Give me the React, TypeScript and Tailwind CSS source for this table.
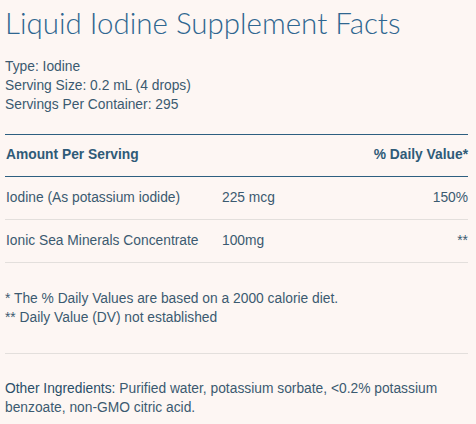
export default function App() {
  const rows = [
    { name: 'Iodine (As potassium iodide)', amount: '225 mcg', dv: '150%' },
    { name: 'Ionic Sea Minerals Concentrate', amount: '100mg', dv: '**' },
  ]

  return (
    <div className="min-h-screen w-[476px] bg-[#fdf6f3] px-[5px] pt-[3px] text-[13.8px] text-[#3b5a70] font-['Liberation_Sans',Arial,sans-serif]">
      <h1 className="text-[29.5px] font-light leading-[40px] text-[#2f6690] font-['Lato','Open_Sans',sans-serif]">
        Liquid Iodine Supplement Facts
      </h1>

      <div className="mt-[14px] leading-[19px]">
        <p>Type: Iodine</p>
        <p>Serving Size: 0.2 mL (4 drops)</p>
        <p>Servings Per Container: 295</p>
      </div>

      <div className="mt-[20px] w-[463px]">
        <div className="flex h-[43px] items-center justify-between border-y-[1.5px] border-[#2d5f80] pl-[1px] font-bold text-[#2f5b78]">
          <span>Amount Per Serving</span>
          <span>% Daily Value*</span>
        </div>
        {rows.map((r) => (
          <div key={r.name} className="flex h-[43px] items-center border-b border-[#e3dfdc] pl-[1px]">
            <span className="w-[216px]">{r.name}</span>
            <span className="flex-1">{r.amount}</span>
            <span>{r.dv}</span>
          </div>
        ))}
      </div>

      <div className="mt-[26px] leading-[19px]">
        <p>* The % Daily Values are based on a 2000 calorie diet.</p>
        <p>** Daily Value (DV) not established</p>
      </div>

      <div className="mt-[26px] w-[463px] border-b border-[#e3dfdc]" />

      <p className="mt-[25px] leading-[19px]">
        <span className="text-[#2a4f69]">Other Ingredients:</span> Purified water, potassium sorbate, &lt;0.2% potassium
        benzoate, non-GMO citric acid.
      </p>
    </div>
  )
}
